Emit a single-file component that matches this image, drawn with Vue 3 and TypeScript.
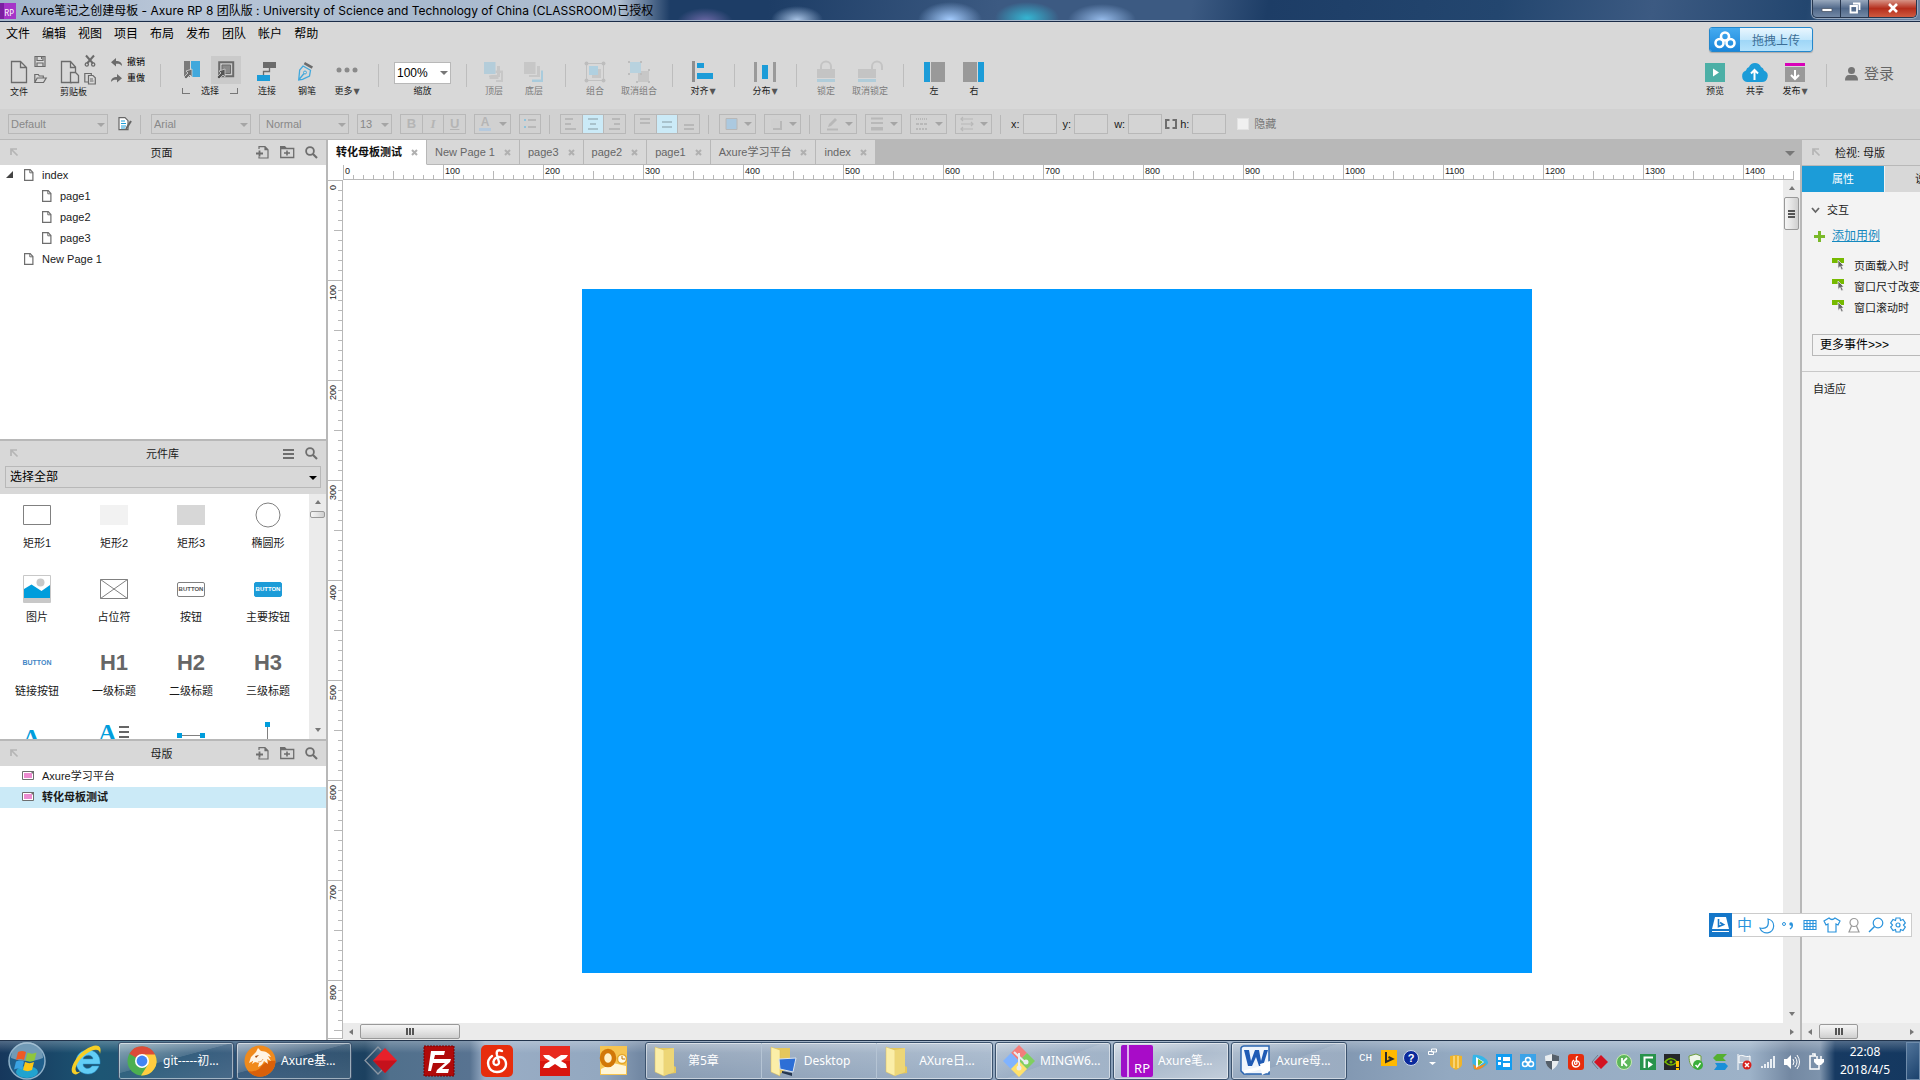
<script setup lang="ts">
import { ref } from 'vue'

interface Tool { id: string; label: string; icon: string; off?: boolean; menu?: boolean; wide?: boolean }
interface Task { label: string; icon: string; active?: boolean }

const menus = ['文件', '编辑', '视图', '项目', '布局', '发布', '团队', '帐户', '帮助']

const icons: Record<string, string> = {
  page: '<path d="M1.5 1.5h9l6 6v15h-15z M10.500 1.500v6h6" fill="none" stroke="#6b6b6b" stroke-width="1.3"/>',
  clip: '<path d="M12 22.500H1.500v-21h9l5 5.500v5 M10.500 1.500v6h5" fill="none" stroke="#6b6b6b" stroke-width="1.300"/><path d="M10.500 12.500h5l3 3v7h-8z" fill="#d8d8d8" stroke="#6b6b6b" stroke-width="1.300"/>',
  save: '<path d="M1 1.500h10v10H1z M3 1.500v4h6v-4 M3 11v-3h6v3" fill="none" stroke="#6b6b6b" stroke-width="1.200"/><path d="M7 2h1v2H7z" fill="#6b6b6b"/>',
  open: '<path d="M.8 10.500v-8h3.500l1 1.500h4v2 M.8 10.500l2.400-4.500h9l-2.700 4.500z" fill="none" stroke="#6b6b6b" stroke-width="1.200"/>',
  cut: '<path d="M2 .5l7 8M10 .5l-7 8" stroke="#6b6b6b" stroke-width="2"/><circle cx="2.800" cy="9.500" r="1.600" fill="none" stroke="#6b6b6b" stroke-width="1.300"/><circle cx="9.200" cy="9.500" r="1.600" fill="none" stroke="#6b6b6b" stroke-width="1.300"/>',
  paste: '<path d="M4 10H.8V1.500h6.500v2" fill="none" stroke="#6b6b6b" stroke-width="1.200"/><path d="M4.500 3.500h4.500l2.300 2.300v6.200H4.500z M6 7h3M6 9h3.500" fill="none" stroke="#6b6b6b" stroke-width="1.200"/>',
  undo: '<path d="M5 0v3c4 0 6 1.500 6 5-1.500-2-3-2.500-6-2.300V8.500L0 4.200z" fill="#6b6b6b"/>',
  redo: '<path d="M6 0v3C2 3 0 4.500 0 8c1.500-2 3-2.500 6-2.300V8.500l5-4.300z" fill="#6b6b6b"/>',
  selA: '<path d="M2 2h6v16H2z" fill="#7b7b7b"/><path d="M9 2h9v16H9z" fill="#41a8dc"/><path d="M10 10v8l-2-2-4 4-2-2 4-4-2-2z" fill="#6b6b6b" stroke="#d8d8d8" stroke-width=".8"/>',
  selB: '<path d="M3.200 3.200h14v14h-14z" fill="none" stroke="#6b6b6b" stroke-width="2"/><path d="M6 6h8.500v8.500H6z" fill="#8a8a8a" stroke="#6b6b6b"/><path d="M9 10v8l-2-2-4 4-2-2 4-4-2-2z" fill="#555" stroke="#ccc" stroke-width=".8"/>',
  connect: '<path d="M7 1h13v6H7z" fill="#6b6b6b"/><path d="M1 14h13v6H1z" fill="#1c9cd8"/><path d="M13.500 7v3.500h-6V14" fill="none" stroke="#6b6b6b" stroke-width="1.300"/>',
  pen: '<path d="M9 1l8 4.500-1.300 2.200-8-4.500z" fill="#6b6b6b"/><path d="M7 5l7.500 4.300-1 5.700-7 3.300L2.700 19l1-10z M3 18.500l5-6" fill="none" stroke="#41a8dc" stroke-width="1.300"/><circle cx="9" cy="11.500" r="1.500" fill="#d8d8d8" stroke="#41a8dc"/>',
  more: '<circle cx="3" cy="9" r="2.500" fill="#8a8a8a"/><circle cx="11" cy="9" r="2.500" fill="#8a8a8a"/><circle cx="19" cy="9" r="2.500" fill="#8a8a8a"/>',
  top: '<path d="M12.500 9.500H20V21h-7v-2h5v-7h-5.500z M8.500 14h7v4h-9v-3z" fill="#c7c7c7"/><path d="M14 5h3v11H6v-1.500h8z" fill="#c7c7c7"/><path d="M1 1h11.500v12H1z" fill="#b4cdda"/>',
  bottom: '<path d="M14 5h3v11H6v-2h8z" fill="#c7c7c7"/><path d="M1 1h11.500v12H1z" fill="#c7c7c7"/><path d="M9 18.500h9V9.500h2V21H9z" fill="#a9cbdc"/>',
  group: '<path d="M2.500 2.500h17v17h-17z" fill="none" stroke="#c0c0c0"/><path d="M8 8h9v9H8z" fill="#c7c7c7"/><path d="M5 5h9v9H5z" fill="#b0d0e0"/><g fill="#bdbdbd"><circle cx="2.500" cy="2.500" r="2"/><circle cx="19.500" cy="2.500" r="2"/><circle cx="2.500" cy="19.500" r="2"/><circle cx="19.500" cy="19.500" r="2"/></g>',
  ungroup: '<path d="M10 10h11v11H10z" fill="#c7c7c7"/><path d="M2 1h11v11H2z" fill="#b8d2df"/><g fill="#bdbdbd"><path d="M0 0h2v2H0zM12 0h2v2h-2zM0 12h2v2H0zM12 12h2v2h-2zM20 8h2v2h-2zM20 20h2v2h-2zM8 20h2v2H8z"/></g>',
  align: '<path d="M0 0h3v21H0z" fill="#8f8f8f"/><path d="M5 2h7v5H5zM5 12h16v6H5z" fill="#1c9cd8"/>',
  distribute: '<path d="M0 1h3v20H0zM19 1h3v20h-3z" fill="#9a9a9a"/><path d="M8 4h6v14H8z" fill="#1c9cd8"/>',
  lock: '<path d="M6 9V5.500a5 5 0 0 1 10 0V9" fill="none" stroke="#c4c4c4" stroke-width="2"/><path d="M2 8h18v9H2z" fill="#c4c4c4"/><path d="M2 18h18v3H2z" fill="#b0ccd9"/>',
  unlock: '<path d="M13 9V5.500a5 5 0 0 1 10 0V9" fill="none" stroke="#c4c4c4" stroke-width="2"/><path d="M-1 8h18v9H-1z" fill="#c4c4c4"/><path d="M-1 18h18v3H-1z" fill="#b0ccd9"/>',
  left: '<path d="M1 1h6v20H1z" fill="#1c9cd8"/><path d="M8 1h14v20H8z" fill="#999"/>',
  right: '<path d="M15 1h6v20h-6z" fill="#1c9cd8"/><path d="M0 1h14v20H0z" fill="#999"/>',
  preview: '<path d="M1 2h20v19H1z" fill="#4cafa6"/><path d="M9 7.500l6 4-6 4z" fill="#fff"/>',
  share: '<path d="M4 21a6 6 0 0 1-1-11.500A5 5 0 0 1 6 6a6.500 6.500 0 0 1 12 0 5 5 0 0 1 3 3.500A6 6 0 0 1 18 21z" fill="#1c9cd8"/><path d="M11.500 19v-9M8 12.500L11.500 9l3.500 3.500" fill="none" stroke="#fff" stroke-width="2"/>',
  publish: '<path d="M1 2h20v3H1z" fill="#d800b8"/><path d="M1 6h20v15H1z" fill="#999"/><path d="M11 9v9M7 14l4 4 4-4" fill="none" stroke="#fff" stroke-width="2"/>',
  search: '<circle cx="5" cy="5" r="3.900" fill="none" stroke="#6e6e6e" stroke-width="1.800"/><path d="M8 8l4 4" stroke="#6e6e6e" stroke-width="2.200"/>',
  addPage: '<path d="M3 3V.7h6l3 3V12H3v-1.500 M9 .7v3h3" fill="none" stroke="#6e6e6e" stroke-width="1.200"/><path d="M0 7.500h7M3.500 4.500v6" stroke="#6e6e6e" stroke-width="1.800"/>',
  addFolder: '<path d="M.7 2.500h13v9H.7z" fill="none" stroke="#6e6e6e" stroke-width="1.300"/><path d="M0 0h5l2 2.500H0z" fill="#6e6e6e"/><path d="M4 7h6M7 4.500v5" stroke="#6e6e6e" stroke-width="1.600"/>',
  list: '<path d="M1 2h11M1 6h11M1 10h11" stroke="#6e6e6e" stroke-width="2"/>',
  collapse: '<path d="M1 7V1h6M1.500 1.500l6 6" fill="none" stroke="#b5b5b5" stroke-width="1.700"/>',
  doc: '<path d="M.6.6h5.600l2.700 3v7.800H.6z" fill="#fff" stroke="#6e6e6e" stroke-width="1.200"/><path d="M5.800.6v3.200h3.200" fill="none" stroke="#6e6e6e"/>',
  master: '<path d="M.5.500h11v8H.5z" fill="#fff" stroke="#6e6e6e"/><path d="M2 2h8v5H2z" fill="#ec8bd0"/><path d="M8 0h4v4z" fill="#6e6e6e"/>',
  event: '<path d="M0 0h12v5H0z" fill="#76b900"/><path d="M6 2v8.500l2-2 1.500 3.500 1.700-.8L9.700 8H12z" fill="#666" stroke="#f3f3f3" stroke-width=".7"/>',
  alignL: '<path d="M1 2h8M1 7h6M1 12h11" stroke="#b8b8b8" stroke-width="2"/>',
  alignC: '<path d="M2 2h10M4 7h6M2 12h10" stroke="#a9c2cc" stroke-width="2"/>',
  alignR: '<path d="M4 2h8M6 7h6M1 12h11" stroke="#b8b8b8" stroke-width="2"/>',
  valT: '<path d="M2 2h10M2 6h10" stroke="#b8b8b8" stroke-width="2"/>',
  valM: '<path d="M2 5h10M2 10h10" stroke="#a9c2cc" stroke-width="2"/>',
  valB: '<path d="M2 8h10M2 12h10" stroke="#b8b8b8" stroke-width="2"/>',
  fill: '<path d="M2 1.500h11v11H2z" fill="#abc9e0" stroke="#b8b8b8"/>',
  shadow: '<path d="M4 4h9v9H4z" fill="#b8b8b8"/><path d="M2 2h9v9H2z" fill="#cfcfcf"/>',
  stroke: '<path d="M2 12.500h11" stroke="#b8b8b8" stroke-width="2"/><path d="M3 10l1-3 6-6 2 2-6 6z" fill="#b8b8b8"/>',
  weight: '<path d="M1 1.500h12M1 6h12M1 11.500h12" stroke="#b8b8b8" stroke-width="2"/><path d="M1 10h12v3.500H1z" fill="#b8b8b8"/>',
  dash: '<path d="M1 2h12" stroke="#b8b8b8" stroke-width="2" stroke-dasharray="1 1"/><path d="M1 7h12" stroke="#b8b8b8" stroke-width="2" stroke-dasharray="3 1"/><path d="M1 12h12" stroke="#b8b8b8" stroke-width="2" stroke-dasharray="2 1"/>',
  arrows: '<path d="M1 2h12M3 0L1 2l2 2M1 7h12M11 5l2 2-2 2M1 12h12M3 10l-2 2 2 2" fill="none" stroke="#b8b8b8" stroke-width="1.200"/>',
  rect1: '<path d="M.5 4.500h27v19H.5z" fill="#fff" stroke="#808080"/>',
  rect2: '<path d="M0 4h28v20H0z" fill="#f2f2f2"/>',
  rect3: '<path d="M0 4h28v20H0z" fill="#d7d7d7"/>',
  oval: '<circle cx="14" cy="14" r="12" fill="#fff" stroke="#808080"/>',
  image: '<path d="M.5.500h27v27H.5z" fill="#fff" stroke="#c8c8c8"/><path d="M1 23h26v4H1z" fill="#c8c8c8"/><circle cx="17.500" cy="7.500" r="4" fill="#c8c8c8"/><path d="M1 14l7.500-4.500 10 6.500 8.500-6v13H1z" fill="#009ddc"/>',
  placeholder: '<path d="M.5 4.500h27v19H.5zM.5 4.500l27 19M27.500 4.500l-27 19" fill="none" stroke="#808080"/>',
  hline: '<path d="M2 12.500h24" stroke="#808080"/><path d="M0 10h5v5H0zM23 10h5v5h-5z" fill="#009ddc"/>',
  vline: '<path d="M13.500 2v26" stroke="#808080"/><path d="M11 -1h5v5h-5z" fill="#009ddc"/>',
  // taskbar programs, 32 x 32
  chrome: '<circle cx="16" cy="16" r="14.500" fill="#4caf50"/><path d="M16 16L3.400 8.700A14.500 14.500 0 0 1 29.300 10H16z" fill="#dd4b39"/><path d="M16 9.500h13A14.500 14.500 0 0 1 15 30.500l7-11z" fill="#ffcd40"/><circle cx="16" cy="16" r="7" fill="#fff"/><circle cx="16" cy="16" r="5.400" fill="#4285f4"/>',
  cheetah: '<circle cx="16" cy="16" r="15.500" fill="#f08a1c"/><path d="M31.500 16A15.500 15.500 0 0 1 4 26c5 1 9 0 12-3s6-8 15.500-7z" fill="#d9600a"/><path d="M5 18l2-6 5-5 2-4 3 3c5 0 9 3 10 6l-3-1 3 5-4-2 1 5-4-3c-1 3-3 5-6 6l1-4-4-1-3 2 1-3-2 1z" fill="#fff4e4"/><path d="M11 11l4-1-3 3z" fill="#a54a08"/><path d="M14 17c3 0 4-1 5-3" fill="none" stroke="#e5a060"/>',
  diamond: '<path d="M16 5l-3-3L0 15.500 13 29l4-4" fill="none" stroke="#8b96a2" stroke-width="1.300"/><path d="M20 3l12 12.500L20 28 8 15.500z" fill="#e8202a"/><path d="M32 15.500L20 28 8 15.500z" fill="#c5111c"/>',
  filezilla: '<path d="M1 1h30v30H1z" fill="#b00a0a" stroke="#7b0000" stroke-dasharray="2 1"/><path d="M8 6h14l-1 4h-9l-1 4h7l-1 4h-7l-2 8H5z M16 14h12l-1 3-8 7h7l-1 4H13l1-3 8-7h-6z" fill="#fff"/>',
  netease: '<rect width="32" height="32" rx="5" fill="#e72d0c"/><path d="M21 6c-4-2-6 0-5 4l2 7c.5 4-6 4-5.500 0 .5-5 8-7 11.500-2 3 6-1 12-8 12-9 0-12-11-5-16" fill="none" stroke="#fff" stroke-width="2.400" stroke-linecap="round"/>',
  xred: '<path d="M1 1h30v30H1z" fill="#d8150e"/><path d="M1 1h30v15H1z" fill="#e82a1e"/><path d="M4 10h6l6 4 6-4h7l-2 3-5 3 5 3 1 4h-6l-6-4-6 4H4l2-4 5-3-5-3z" fill="#fff"/>',
  outlook: '<path d="M3 1h27v29H3z" fill="#f6c451"/><path d="M4 24l12-6 13 3v8H4z" fill="#fff6d8"/><ellipse cx="11" cy="13" rx="6" ry="7" fill="#fff0c8" stroke="#d27808" stroke-width="4.500"/><circle cx="25" cy="14" r="4.500" fill="#fffbe8" stroke="#e5a82c" stroke-width="1.500"/><path d="M25 11v3h3" fill="none" stroke="#c07000"/>',
  folder: '<path d="M9 3h15v18l2 1v6l-15 2z" fill="#e5c75c"/><path d="M5 2l9 3v26l-9-4z" fill="#fbeea8" stroke="#d9bb55" stroke-width=".5"/><path d="M14 5l10-2v24l-10 4z" fill="#edd677"/>',
  deskfolder: '<path d="M9 3h15v18l-10 8z" fill="#e5c75c"/><path d="M5 2l9 3v26l-9-4z" fill="#fbeea8" stroke="#d9bb55" stroke-width=".5"/><path d="M13 14l17-1-3 14-13-3z" fill="#2d6fd6" stroke="#dce5ef"/><path d="M16 26l10 2v3l-10-3z" fill="#24364f"/>',
  git: '<path d="M16 0l8 8-8 8-8-8z" fill="#f37e7c"/><path d="M8 8l8 8-8 8-8-8z" fill="#80b3ff"/><path d="M24 8l8 8-8 8-8-8z" fill="#80cf60"/><path d="M16 16l8 8-8 8-8-8z" fill="#ffe16b"/><path d="M16 8v14M11 7l12 11" stroke="#e8edf2" stroke-width="2"/><circle cx="16" cy="23" r="2.500" fill="#e8edf2"/><circle cx="23" cy="17" r="2.500" fill="#e8edf2"/>',
  word: '<path d="M2 3a3 3 0 0 1 3-2h25v28H5l-3-3z" fill="#eef4fc" stroke="#2a64b0" stroke-width="1.500"/><path d="M5 5h5l2 11 4-11h4l2 11 3-11h4l-5 16h-4l-3-9-4 9H9z" fill="#1f5bb5"/><path d="M21 19l10-3v10l-8 4z" fill="#fff"/><path d="M5 27l20-5" stroke="#fff" stroke-width="3"/>',
  start: '<circle cx="19" cy="19" r="18" fill="#1f5f8c" stroke="#8fb1c9" stroke-width="1.500"/><ellipse cx="19" cy="30" rx="11" ry="6" fill="#23b9e6" opacity=".75"/><path d="M3 16a16 16 0 0 1 32 0c-9 4-22 4-32 0z" fill="#b5cad9" opacity=".55"/><path d="M10 10c3-1.500 5-1.500 8 0l-2 8c-3-1.500-5-1.500-8 0z" fill="#ef5a24"/><path d="M19.500 10.500c3 1.500 6 1.500 9 0l-2 8c-3 1.500-6 1.500-9 0z" fill="#8fc63d"/><path d="M8 19.500c3-1.500 5-1.500 8 0l-2 8c-3-1.500-5-1.500-8 0z" fill="#3aa3e3"/><path d="M17 20c3 1.500 6 1.500 9 0l-2 8c-3 1.500-6 1.500-9 0z" fill="#fbc616"/>',
  ie: '<path d="M28 21c-2 5-6 8-11 8-7 0-12-5-12-12S10 5 17 5s12 5 12 12v2H12c0 5 7 6 9 2z M12 14h10c0-5-9-5-10 0z" fill="#62cdf6" fill-rule="evenodd" stroke="#2a9ad4" stroke-width=".5"/><path d="M3 29C-3 26 4 12 14 5S32-1 29 9c0-6-7-5-14 0S3 23 5 26c1 2 3 1 5 0-3 3-5 4-7 3z" fill="#f6cf26"/>',
}

const docTools: Tool[] = [
  { id: 'connect', label: '连接', icon: 'connect' },
  { id: 'pen', label: '钢笔', icon: 'pen' },
  { id: 'more', label: '更多', icon: 'more', menu: true },
]
const toolGroups: Tool[][] = [
  [{ id: 'top', label: '顶层', icon: 'top', off: true }, { id: 'bottom', label: '底层', icon: 'bottom', off: true }],
  [{ id: 'group', label: '组合', icon: 'group', off: true, wide: true }, { id: 'ungroup', label: '取消组合', icon: 'ungroup', off: true, wide: true }],
  [{ id: 'align', label: '对齐', icon: 'align', menu: true }],
  [{ id: 'distribute', label: '分布', icon: 'distribute', menu: true }],
  [{ id: 'lock', label: '锁定', icon: 'lock', off: true, wide: true }, { id: 'unlock', label: '取消锁定', icon: 'unlock', off: true, wide: true }],
  [{ id: 'left', label: '左', icon: 'left' }, { id: 'right', label: '右', icon: 'right' }],
]
const shareTools: Tool[] = [
  { id: 'preview', label: '预览', icon: 'preview' },
  { id: 'share', label: '共享', icon: 'share' },
  { id: 'publish', label: '发布', icon: 'publish', menu: true },
]

const tabs = ['转化母板测试', 'New Page 1', 'page3', 'page2', 'page1', 'Axure学习平台', 'index']
const activeTab = ref(0)
const pages = [
  { name: 'index', depth: 0, open: true },
  { name: 'page1', depth: 1 },
  { name: 'page2', depth: 1 },
  { name: 'page3', depth: 1 },
  { name: 'New Page 1', depth: 0 },
]
const masters = ['Axure学习平台', '转化母板测试']
const activeMaster = ref(1)

const widgets = [
  { name: '矩形1', icon: 'rect1' }, { name: '矩形2', icon: 'rect2' }, { name: '矩形3', icon: 'rect3' }, { name: '椭圆形', icon: 'oval' },
  { name: '图片', icon: 'image' }, { name: '占位符', icon: 'placeholder' }, { name: '按钮', text: 'BUTTON', kind: 'btn' }, { name: '主要按钮', text: 'BUTTON', kind: 'btn primary' },
  { name: '链接按钮', text: 'BUTTON', kind: 'link' }, { name: '一级标题', text: 'H1', kind: 'head' }, { name: '二级标题', text: 'H2', kind: 'head' }, { name: '三级标题', text: 'H3', kind: 'head' },
  { name: '', text: 'A', kind: 'letter low' }, { name: '', text: 'A', kind: 'letter para' }, { name: '', icon: 'hline' }, { name: '', icon: 'vline' },
]

const hMarks = Array.from({ length: 15 }, (_, i) => i * 100)
const vMarks = Array.from({ length: 9 }, (_, i) => i * 100)
const events = ['页面载入时', '窗口尺寸改变时', '窗口滚动时']

const folderTasks: Task[] = [
  { label: '第5章', icon: 'folder' },
  { label: 'Desktop', icon: 'deskfolder' },
  { label: 'AXure日...', icon: 'folder' },
]
const pinned = [
  { name: 'diamond', label: 'Diamond' },
  { name: 'filezilla', label: 'FileZilla' },
  { name: 'netease', label: 'Music' },
  { name: 'xred', label: 'X' },
  { name: 'outlook', label: 'Outlook' },
]
const trayIcons = [
  '<path d="M2 2l6-1 6 1v8c0 3-3 4-6 6-3-2-6-3-6-6z" fill="#f0b429"/><path d="M6 2v12M10 2v12" stroke="#fff3c0"/>',
  '<path d="M1 1c8-1 14 4 15 7s-8 8-14 8C0 11 0 5 1 1z" fill="#35b6e8"/><path d="M1 10c4 4 8 2 13-1-2 5-8 8-12 6z" fill="#f58a1f"/><path d="M4 3l8 5-8 6z" fill="#fff"/><path d="M6 5l5 3-5 4z" fill="#74c12b"/>',
  '<path d="M0 0h16v16H0z" fill="#139cf0"/><path d="M2 3h3v3H2zM2 8h3v3H2zM7 3h7v4H7zM7 9h7v4H7z" fill="#fff"/>',
  '<path d="M0 0h16v16H0z" fill="#3ba3e8"/><circle cx="8" cy="6" r="2.500" fill="none" stroke="#fff" stroke-width="1.500"/><circle cx="5" cy="10" r="2.500" fill="none" stroke="#fff" stroke-width="1.500"/><circle cx="11" cy="10" r="2.500" fill="none" stroke="#fff" stroke-width="1.500"/>',
  '<path d="M1 2l7-2 7 2c0 7-2 11-7 14C3 13 1 9 1 2z" fill="#e9edf0"/><path d="M8 0l7 2v5H8zM1.500 7H8v9C4 14 2 11 1.500 7z" fill="#55606b"/>',
  '<rect width="16" height="16" rx="3" fill="#e72d0c"/><path d="M10 3c-2-1-2 1-1.500 3l.5 3c0 2-3 2-2.500-.5.5-2 3-2 4.500-.5 2 3-1 5-3 5-4 0-5-5-2-7" fill="none" stroke="#fff" stroke-width="1.300"/>',
  '<path d="M9 1l7 7-7 7-7-7z" fill="#d31322"/><path d="M6 1L0 8l6 7" fill="none" stroke="#707b8a"/>',
  '<circle cx="8" cy="8" r="7.500" fill="#5db75b" stroke="#c6e9b4"/><path d="M6 4v8M11 4L7 8l4 4" fill="none" stroke="#fff" stroke-width="1.800"/>',
  '<path d="M0 0h16v16H0z" fill="#28934c"/><path d="M4.500 14V3.500H13" fill="none" stroke="#fff" stroke-width="2"/><path d="M8 7l5 3.500L8 14z" fill="#fff"/>',
  '<path d="M0 0h16v16H0z" fill="#25272a"/><path d="M1 8c4-5 9-4 12 0-4 4-8 4-12 0z" fill="none" stroke="#76b900" stroke-width="1.500"/><circle cx="7" cy="8" r="1.500" fill="#76b900"/><path d="M12 7h3v6h-3zM12 14h3v2h-3z" fill="#ffc400"/>',
  '<path d="M1 2l7-2 5 2v6L6 14C3 12 1 9 1 2z" fill="#eef5e9" stroke="#6d9f3e"/><circle cx="10" cy="11" r="5" fill="#3bae3b"/><path d="M7.500 11l2 2 3-4" fill="none" stroke="#fff" stroke-width="1.500"/>',
  '<path d="M1 4l4-4h10l-4 4 3 3H4z" fill="#55b030"/><path d="M3 9h10l3 3-3 4H2l3-4z" fill="#1a8fd8"/>',
  '<path d="M2 0v16M3 2c4-2 6 2 11 0v7c-5 2-7-2-11 0z" fill="#b9c6d4" stroke="#fff"/><circle cx="11" cy="11" r="4.500" fill="#d8201c"/><path d="M9 9l4 4M13 9l-4 4" stroke="#fff" stroke-width="1.500"/>',
  '<g fill="#e9eef3"><path d="M1 12h2v2H1zM4 10h2v4H4zM7 8h2v6H7zM10 5h2v9h-2zM13 2h2v12h-2z"/></g>',
  '<path d="M0 5h3l4-4v14l-4-4H0z" fill="#fff"/><path d="M9 5q2 3 0 6M11 3q4 5 0 10M13 1q5 7 0 14" fill="none" stroke="#fff"/>',
  '<path d="M8 2H2v13h6M4 0h3v2" fill="none" stroke="#fff" stroke-width="1.500"/><path d="M9 2v4M13 2v4M11 11v4H8" fill="none" stroke="#fff" stroke-width="1.500"/><path d="M6 5h10v3l-3 3H9L6 8z" fill="#fff"/>',
]
const imeIcons = [
  '<path d="M10 2a7 7 0 1 1-8 9q10 2 8-9z" fill="none" stroke="#2a93dc" stroke-width="1.200"/>',
  '<circle cx="4" cy="7" r="1.500" fill="none" stroke="#2a93dc"/><circle cx="11" cy="7" r="1.700" fill="#2a93dc"/><path d="M12 7q1 3-2 5" fill="none" stroke="#2a93dc" stroke-width="1.500"/>',
  '<path d="M2 3.500h12v9H2zM2 6.500h12M2 9.500h12M5 3.500v9M8 3.500v9M11 3.500v9" fill="none" stroke="#2a93dc" stroke-width="1.100"/>',
  '<path d="M5 1q3 3 6 0l5 3-2 4-2-1v8H4V7L2 8 0 4z" fill="none" stroke="#2a93dc" stroke-width="1.200"/>',
  '<circle cx="8" cy="5.500" r="4" fill="none" stroke="#999" stroke-width="1.200"/><path d="M5.500 9L3 15h10l-2.500-6" fill="none" stroke="#999" stroke-width="1.200"/>',
  '<circle cx="10" cy="6" r="4.800" fill="none" stroke="#2a93dc" stroke-width="1.200"/><path d="M6.500 9.500L1 15" stroke="#2a93dc" stroke-width="1.500"/>',
  '<circle cx="8" cy="8" r="2" fill="none" stroke="#2a93dc" stroke-width="1.200"/><path d="M6 1h4l.5 2.500 2.500-1 2.300 3.500L13.500 8l1.800 2-2.300 3.500-2.500-1L10 15H6l-.5-2.500-2.500 1L.7 10l1.800-2L.7 6 3 2.500l2.500 1z" fill="none" stroke="#2a93dc" stroke-width="1.200"/>',
]
</script>

<template>
  <div class="desktop">
    <header class="titlebar">
      <span class="app-logo">RP</span>
      <h1>Axure笔记之创建母板 - Axure RP 8 团队版 : University of Science and Technology of China (CLASSROOM)已授权</h1>
      <div class="win-controls">
        <button aria-label="最小化"><svg width="12" height="12"><path d="M1 6.500h10v3H1z" fill="#fff" stroke="#4b5768" stroke-width=".8" /></svg></button>
        <button aria-label="还原"><svg width="12" height="12"><path d="M4 1.500h6.500V8M1.500 4h6.500v6.500H1.500z" fill="none" stroke="#fff" stroke-width="1.800" /></svg></button>
        <button class="close" aria-label="关闭"><svg width="12" height="10"><path d="M2 1l8 8M10 1L2 9" stroke="#fff" stroke-width="2.600" /></svg></button>
      </div>
    </header>

    <nav class="menubar">
      <button v-for="m in menus" :key="m">{{ m }}</button>
    </nav>
    <button class="upload">
      <span class="upload-logo"><svg width="22" height="18" viewBox="0 0 22 18" fill="none" stroke="#fff" stroke-width="2.600"><circle cx="11" cy="5.500" r="4" /><circle cx="5.500" cy="12" r="4" /><circle cx="16.500" cy="12" r="4" /></svg></span>
      <span class="upload-text">拖拽上传</span>
    </button>

    <div class="toolbar">
      <div class="file-tool">
        <button aria-label="新建"><svg width="18" height="24" v-html="icons.page" /></button>
        <div class="mini">
          <button aria-label="保存"><svg width="13" height="13" v-html="icons.save" /></button>
          <button aria-label="打开"><svg width="13" height="13" v-html="icons.open" /></button>
        </div>
        <span class="cap">文件</span>
      </div>
      <div class="file-tool clip">
        <button aria-label="复制"><svg width="20" height="24" v-html="icons.clip" /></button>
        <div class="mini">
          <button aria-label="剪切"><svg width="13" height="13" v-html="icons.cut" /></button>
          <button aria-label="粘贴"><svg width="13" height="13" v-html="icons.paste" /></button>
        </div>
        <span class="cap">剪贴板</span>
      </div>
      <div class="history">
        <button><svg width="11" height="9" v-html="icons.undo" />撤销</button>
        <button><svg width="11" height="9" v-html="icons.redo" />重做</button>
      </div>
      <i class="sep first" />
      <div class="select-tool">
        <div class="select-modes">
          <button aria-label="相交选中"><svg width="20" height="22" v-html="icons.selA" /></button>
          <button class="on" aria-label="包含选中"><svg width="20" height="22" v-html="icons.selB" /></button>
        </div>
        <div class="bracket"><i /><span>选择</span><i class="r" /></div>
      </div>
      <button v-for="t in docTools" :key="t.id" class="tool">
        <svg width="22" height="22" v-html="icons[t.icon]" /><span>{{ t.label }}<b v-if="t.menu">▼</b></span>
      </button>
      <i class="sep zoom-sep" />
      <div class="zoom">
        <span class="drop white"><select id="zoom"><option>100%</option></select></span>
        <label for="zoom">缩放</label>
      </div>
      <template v-for="(g, gi) in toolGroups" :key="gi">
        <i class="sep" :class="{ tight: g[0].off }" />
        <button v-for="t in g" :key="t.id" class="tool" :class="{ off: t.off, wide: t.wide }">
          <svg width="22" height="22" v-html="icons[t.icon]" /><span>{{ t.label }}<b v-if="t.menu">▼</b></span>
        </button>
      </template>
      <div class="push">
        <button v-for="t in shareTools" :key="t.id" class="tool">
          <svg :width="t.id === 'share' ? 24 : 22" height="22" v-html="icons[t.icon]" /><span>{{ t.label }}<b v-if="t.menu">▼</b></span>
        </button>
        <i class="sep" />
        <button class="login"><svg width="13" height="14"><circle cx="6.500" cy="3.500" r="3.500" fill="#757575" /><path d="M0 13.500q0-5.500 4-5.500h5q4 0 4 5.500z" fill="#757575" /></svg>登录</button>
      </div>
    </div>

    <div class="stylebar">
      <span class="drop w100"><select aria-label="样式"><option>Default</option></select></span>
      <button class="bare" aria-label="样式管理"><svg width="14" height="14"><path d="M1 .7h6l3 3v9H1z" fill="#fff" stroke="#666" stroke-width="1.200" /><path d="M3 4h4M3 6.500h5M3 9h5M3 11h4" stroke="#1c9cd8" /><path d="M8 12l5-8" stroke="#666" stroke-width="2" /></svg></button>
      <i class="vs" />
      <span class="drop w100"><select aria-label="字体"><option>Arial</option></select></span>
      <span class="drop w90"><select aria-label="字形"><option>Normal</option></select></span>
      <span class="drop w35"><select aria-label="字号"><option>13</option></select></span>
      <div class="seg"><button class="bold">B</button><button class="ital">I</button><button class="under">U</button></div>
      <button class="dd"><span class="color-a">A</span></button>
      <button class="box" aria-label="项目符号"><svg width="14" height="14"><path d="M1 2h2v2H1zM1 9h2v2H1z" fill="#8ec3dc" /><path d="M5 3h8M5 10h8" stroke="#b8b8b8" stroke-width="2" /></svg></button>
      <i class="vs" />
      <div class="seg"><button v-for="a in ['alignL', 'alignC', 'alignR']" :key="a" :class="{ on: a === 'alignC' }" :aria-label="a"><svg width="14" height="14" v-html="icons[a]" /></button></div>
      <div class="seg"><button v-for="a in ['valT', 'valM', 'valB']" :key="a" :class="{ on: a === 'valM' }" :aria-label="a"><svg width="14" height="14" v-html="icons[a]" /></button></div>
      <i class="vs" />
      <button v-for="a in ['fill', 'shadow']" :key="a" class="dd" :aria-label="a"><svg width="14" height="14" v-html="icons[a]" /></button>
      <i class="vs" />
      <button v-for="a in ['stroke', 'weight', 'dash', 'arrows']" :key="a" class="dd" :aria-label="a"><svg width="14" height="14" v-html="icons[a]" /></button>
      <i class="vs" />
      <div class="coords">
        <label>x:<input type="text" /></label>
        <label>y:<input type="text" /></label>
        <label>w:<input type="text" /></label>
        <label class="h"><svg width="12" height="10"><path d="M4.500 1H1v8h3.500M7.500 1H11v8H7.500" fill="none" stroke="#6e6e6e" stroke-width="2" /></svg>h:<input type="text" /></label>
        <label class="hide"><input type="checkbox" />隐藏</label>
      </div>
    </div>

    <main class="work">
      <aside class="left">
        <section class="panel pages">
          <header><svg class="corner" width="9" height="9" v-html="icons.collapse" /><h2>页面</h2>
            <button aria-label="添加页面"><svg width="14" height="13" v-html="icons.addPage" /></button>
            <button aria-label="添加文件夹"><svg width="15" height="13" v-html="icons.addFolder" /></button>
            <button aria-label="搜索"><svg width="13" height="13" v-html="icons.search" /></button>
          </header>
          <ul class="tree">
            <li v-for="p in pages" :key="p.name" :class="{ child: p.depth }"><i class="tw" :class="{ open: p.open }" /><svg width="10" height="12" v-html="icons.doc" />{{ p.name }}</li>
          </ul>
        </section>
        <section class="panel library">
          <header><svg class="corner" width="9" height="9" v-html="icons.collapse" /><h2>元件库</h2>
            <button aria-label="选项"><svg width="13" height="12" v-html="icons.list" /></button>
            <button aria-label="搜索"><svg width="13" height="13" v-html="icons.search" /></button>
          </header>
          <div class="lib-pick"><span class="drop dark"><select aria-label="元件库"><option>选择全部</option></select></span></div>
          <div class="lib-body">
            <div class="grid">
              <div v-for="(w, i) in widgets" :key="i" class="widget">
                <span class="art">
                  <svg v-if="w.icon" width="28" height="28" v-html="icons[w.icon]" />
                  <span v-else :class="w.kind">{{ w.text }}</span>
                </span>
                <span class="name">{{ w.name }}</span>
              </div>
            </div>
            <div class="vbar"><i class="up" /><span class="thumb small" /><i class="down" /></div>
          </div>
        </section>
        <section class="panel masters">
          <header><svg class="corner" width="9" height="9" v-html="icons.collapse" /><h2>母版</h2>
            <button aria-label="添加母版"><svg width="14" height="13" v-html="icons.addPage" /></button>
            <button aria-label="添加文件夹"><svg width="15" height="13" v-html="icons.addFolder" /></button>
            <button aria-label="搜索"><svg width="13" height="13" v-html="icons.search" /></button>
          </header>
          <ul class="tree">
            <li v-for="(m, i) in masters" :key="m" :class="{ picked: i === activeMaster }" @click="activeMaster = i"><i class="tw" /><svg class="m" width="12" height="9" v-html="icons.master" />{{ m }}</li>
          </ul>
        </section>
      </aside>

      <section class="center">
        <div class="tabs">
          <button v-for="(t, i) in tabs" :key="t" :class="{ active: i === activeTab }" @click="activeTab = i">{{ t }}
            <svg width="7" height="7"><path d="M1 1l5 5M6 1L1 6" stroke="#b0b0b0" stroke-width="2" /></svg>
          </button>
          <i class="tab-more" />
        </div>
        <div class="hruler"><span v-for="n in hMarks" :key="n">{{ n }}</span></div>
        <div class="stage">
          <div class="vruler"><span v-for="n in vMarks" :key="n"><b>{{ n }}</b></span></div>
          <div class="view">
            <div class="canvas-row">
              <div class="canvas"><div class="shape" /></div>
              <div class="vbar"><i class="up" /><span class="thumb" /><i class="down" /></div>
            </div>
            <div class="hbar"><i class="lt" /><span class="thumb" /><i class="rt" /></div>
          </div>
        </div>
      </section>

      <aside class="inspector">
        <header><svg class="corner" width="9" height="9" v-html="icons.collapse" /><h2>检视: 母版</h2></header>
        <div class="itabs"><button class="on">属性</button><button>说明</button></div>
        <div class="ibody">
          <h3><svg width="9" height="7"><path d="M1 1l3.500 4L8 1" fill="none" stroke="#666" stroke-width="1.800" /></svg>交互</h3>
          <p class="add"><svg width="11" height="11"><path d="M0 5.500h11M5.500 0v11" stroke="#7ab929" stroke-width="3" /></svg><a href="#">添加用例</a></p>
          <ul><li v-for="e in events" :key="e"><svg width="13" height="13" v-html="icons.event" />{{ e }}</li></ul>
          <button class="more-events">更多事件&gt;&gt;&gt;</button>
          <p class="adapt">自适应</p>
        </div>
        <div class="hbar"><i class="lt" /><span class="thumb" /><i class="rt" /></div>
      </aside>
    </main>

    <div class="ime">
      <span class="ime-logo"><svg width="17" height="18"><path d="M3 1h11l3 12H0z" fill="#fff" /><path d="M0 15.500h17" stroke="#fff" /><path d="M6.500 3v7.500l5-2-3.500-2" fill="none" stroke="#1577c9" stroke-width="1.600" /></svg></span>
      <span class="zh">中</span>
      <svg v-for="(g, i) in imeIcons" :key="i" width="16" height="16" v-html="g" />
    </div>

    <footer class="taskbar">
      <button class="orb" aria-label="开始"><svg width="38" height="38" v-html="icons.start" /></button>
      <button class="ie" aria-label="Internet Explorer"><svg width="32" height="32" v-html="icons.ie" /></button>
      <button class="task dark"><svg width="32" height="32" v-html="icons.chrome" />git-----初...</button>
      <button class="task dark"><svg width="32" height="32" v-html="icons.cheetah" />Axure基...</button>
      <div class="pins"><button v-for="p in pinned" :key="p.name" :aria-label="p.label"><svg width="32" height="32" v-html="icons[p.name]" /></button></div>
      <div class="stack"><button v-for="(f, i) in folderTasks" :key="i"><svg width="32" height="32" v-html="icons[f.icon]" />{{ f.label }}</button></div>
      <button class="task"><svg width="32" height="32" v-html="icons.git" />MINGW6...</button>
      <button class="task active"><span class="rp">RP</span>Axure笔...</button>
      <button class="task"><svg width="32" height="32" v-html="icons.word" />Axure母...</button>
      <div class="tray">
        <span class="lang">CH</span>
        <svg width="16" height="16"><path d="M0 0h16v16H0z" fill="#ffb900" /><path d="M5 2v10l6.500-3-4-2" fill="none" stroke="#2b2b2b" stroke-width="2" /></svg>
        <span class="help">?</span>
        <svg class="restore" width="9" height="18"><path d="M3.500 1h5v3h-5zM.5 3.500h5v3h-5z" fill="none" stroke="#fff" /><path d="M1 14h7l-3.500 3z" fill="#fff" /></svg>
        <div class="icons"><svg v-for="(g, i) in trayIcons" :key="i" width="16" height="16" v-html="g" /></div>
        <div class="clock"><time>22:08</time><time>2018/4/5</time></div>
        <button class="peek" aria-label="显示桌面" />
      </div>
    </footer>
  </div>
</template>

<style>
body { margin: 0; }
</style>

<style scoped>
* { box-sizing: border-box; }
.desktop { position: relative; display: flex; flex-direction: column; min-height: 100vh; overflow: hidden; background: #d8d8d8; color: #1a1a1a; font: 11px/16px "Liberation Sans", "Noto Sans CJK SC", sans-serif; }
button { font: inherit; color: inherit; background: none; border: 0; padding: 0; margin: 0; }
svg { display: block; flex: none; overflow: visible; }
h1, h2, h3, p, ul { margin: 0; padding: 0; list-style: none; font-weight: normal; }
i { font-style: normal; }

.titlebar { height: 22px; display: flex; align-items: center; border-bottom: 1px solid #1b2c48; box-shadow: inset 0 -1px #a8b8cc; overflow: hidden;
  background:
    radial-gradient(ellipse 28px 14px at 705px 22px, #6f6aa8, transparent),
    radial-gradient(ellipse 26px 14px at 797px 20px, #a9c4e6, transparent),
    radial-gradient(ellipse 32px 18px at 950px 20px, #a5cdff, transparent),
    radial-gradient(ellipse 32px 16px at 1027px 18px, #35b5d2, transparent),
    radial-gradient(ellipse 34px 16px at 1102px 20px, #96bbea, transparent),
    linear-gradient(90deg, #9fb2ca 0, #bac7d8 180px, #a9bace 420px, #aebdd0 620px, transparent 670px),
    linear-gradient(100deg, #1d3d66 0 40%, #3c5a82 52%, #3c5a82 62%, #1d3d66 66%, #23466f 78%, #3c5a82 86%, #23466f 94%, #6b84a3); }
.app-logo { width: 16px; height: 16px; background: linear-gradient(90deg, #7b1fa2 0 4px, #a535c8 4px); color: #fff; font: 8px/20px "Noto Sans", sans-serif; text-align: right; padding-right: 2px; }
h1 { font: 12px/18px Inter, "Noto Sans CJK SC", sans-serif; color: #000; padding-left: 5px; white-space: nowrap; }
.win-controls { margin: 0 3px 4px auto; height: 18px; display: flex; border: 1px solid #26364e; border-top: 0; border-radius: 0 0 5px 5px; overflow: hidden; box-shadow: 0 0 1px 1px #9fb0c5; }
.win-controls button { width: 28px; display: grid; place-items: center; background: linear-gradient(#98a8bd, #51698a 50%, #7288a5); border-right: 1px solid #26364e; }
.win-controls .close { width: 47px; border: 0; background: linear-gradient(#d79386, #b52e1c 50%, #cf5a40); }

.menubar { height: 26px; display: flex; align-items: center; gap: 12px; padding: 0 6px 2px; font-size: 12px; color: #000; }
.upload { position: absolute; top: 27px; right: 107px; width: 104px; height: 25px; display: flex; border: 1px solid #2387cc; border-radius: 3px; overflow: hidden; background: linear-gradient(#e9f6fe, #c4e7fb 50%, #9ed6f7 52%, #b5e2fb); box-shadow: 0 1px 1px #aaa; }
.upload-logo { width: 30px; height: 23px; display: grid; place-items: center; background: linear-gradient(#45abf0, #1b86da); }
.upload-text { flex: 1; font-size: 12px; line-height: 26px; color: #3c6e96; }

.toolbar { height: 61px; display: flex; align-items: flex-start; padding-top: 8px; font-size: 9px; line-height: 12px; white-space: nowrap; }
.toolbar > * { flex: none; }
.file-tool { margin-left: 10px; width: 40px; display: grid; grid-template-columns: 24px 16px; grid-template-rows: 30px 12px; align-items: center; }
.file-tool.clip { width: 50px; }
.file-tool > button { padding-top: 2px; }
.mini { display: flex; flex-direction: column; gap: 4px; padding-bottom: 3px; }
.cap { grid-column: 1 / 3; }
.history { margin-left: 1px; display: flex; flex-direction: column; gap: 4px; }
.history button { display: flex; align-items: center; gap: 5px; font-size: 9px; color: #000; }
.sep { width: 1px; height: 23px; margin: 8px 10px 0 11px; background: #bdbdbd; }
.sep.tight { margin-right: 7px; }
.sep.first { margin: 8px 21px 0 15px; }
.sep.zoom-sep { margin-right: 15px; }
.select-tool { width: 65px; }
.select-modes { display: flex; gap: 9px; }
.select-modes button { width: 20px; height: 28px; display: grid; place-items: center; }
.select-modes .on { width: 30px; background: #cacaca; }
.bracket { display: flex; align-items: center; justify-content: space-between; width: 56px; height: 14px; }
.bracket i { width: 8px; height: 6px; border: solid #777; border-width: 0 0 1px 1px; }
.bracket i.r { border-width: 0 1px 1px 0; }
.tool { width: 40px; display: flex; flex-direction: column; align-items: center; gap: 2px; padding-top: 5px; }
.tool svg { height: 22px; }
.tool b { font: 8px/10px "DejaVu Sans", sans-serif; color: #555; margin-left: 1px; }
.tool.wide { width: 44px; }
.tool.off { color: #7c7c7c; }
.zoom { display: flex; flex-direction: column; align-items: center; gap: 1px; padding-top: 6px; width: 57px; margin-right: 4px; }
.push { margin-left: auto; display: flex; padding-right: 26px; }
.push .sep { margin-right: 18px; }
.login { display: flex; align-items: center; gap: 6px; height: 36px; font-size: 15px; color: #666; }

.drop { position: relative; display: block; height: 20px; }
.drop select { appearance: none; width: 100%; height: 100%; margin: 0; padding: 0 2px; border: 1px solid #b8b8b8; border-radius: 0; background: none; font: inherit; color: #888; }
.drop::after { content: ""; position: absolute; right: 3px; top: 9px; border: 4px solid transparent; border-top-color: #a5a5a5; border-bottom: 0; pointer-events: none; }
.drop.white { width: 57px; height: 22px; font-size: 12px; }
.drop.white select { background: #fff; color: #000; }
.drop.white::after { border-top-color: #777; }
.drop.dark { width: 100%; height: 22px; font-size: 12px; }
.drop.dark select { color: #000; padding-left: 4px; }
.drop.dark::after { border-top-color: #000; right: 4px; top: 10px; }
.w100 { width: 100px; } .w90 { width: 90px; } .w35 { width: 35px; }
.w90 select { padding-left: 6px; }

.stylebar { height: 31px; display: flex; align-items: center; gap: 8px; padding: 0 8px; background: #d1d1d1; border-bottom: 1px solid #b8b8b8; white-space: nowrap; }
.stylebar > * { flex: none; }
.bare { width: 16px; padding-left: 2px; }
.vs { width: 3px; height: 19px; border-left: 1px solid #b8b8b8; }
.seg { display: flex; border: 1px solid #b8b8b8; height: 20px; width: 66px; color: #b5b5b5; font-weight: bold; }
.seg button { flex: 1; display: grid; place-items: center; }
.seg button + button { border-left: 1px solid #b8b8b8; }
.seg .on { background: #cbeaf7; }
.bold, .ital, .under { font-size: 13px; }
.ital { font-style: italic; font-family: "Liberation Serif", serif; }
.under { text-decoration: underline; }
.box { width: 22px; height: 20px; border: 1px solid #b8b8b8; display: grid; place-items: center; }
.dd { width: 37px; height: 20px; border: 1px solid #b8b8b8; display: flex; align-items: center; justify-content: space-between; padding: 0 3px 0 4px; }
.dd::after { content: ""; border: 4px solid transparent; border-top-color: #a5a5a5; border-bottom: 0; }
.color-a { width: 12px; height: 14px; line-height: 11px; font-size: 12px; font-weight: bold; color: #b5b5b5; border-bottom: 3px solid #b5c9dd; }
.coords { display: flex; align-items: center; gap: 6px; }
.coords label { display: flex; align-items: center; gap: 3px; }
.coords input[type=text] { width: 34px; height: 20px; border: 1px solid #b8b8b8; background: #d4d4d4; padding: 0; margin: 0; }
.coords .h { margin-left: -3px; }
.coords .hide { margin-left: 5px; gap: 5px; color: #777; }
.coords input[type=checkbox] { appearance: none; width: 12px; height: 12px; margin: 0; background: #f0f0f0; border: 1px solid #e2e2e2; }

.work { flex: 1; display: flex; background: #b8b8b8; gap: 2px; }
.left { flex: 0 0 326px; display: flex; flex-direction: column; gap: 2px; }
.panel header, .inspector header { height: 25px; display: flex; align-items: center; background: #d8d8d8; position: relative; padding: 0 8px 0 10px; gap: 10px; }
.panel header button { display: block; }
h2 { font-size: 11px; }
.panel h2 { flex: 1; text-align: center; }
.pages h2, .masters h2 { padding-left: 48px; }
.library h2 { padding-left: 24px; }
.pages { background: #fff; height: 299px; }
.tree li { height: 21px; display: flex; align-items: center; padding-bottom: 2px; }
.tree li svg { margin-right: 8px; }
.tree li svg.m { margin: 0 8px 0 -2px; }
.tree .child { padding-left: 18px; }
.tw { width: 24px; height: 7px; padding-left: 6px; }
.tw.open::before { content: ""; display: block; width: 0; border-left: 7px solid transparent; border-bottom: 7px solid #444; }
.picked { background: #cbeaf7; font-weight: bold; }
.library { height: 298px; background: #d8d8d8; }
.lib-pick { padding: 0 5px 6px; }
.lib-body { height: 245px; display: flex; background: #fff; overflow: hidden; }
.grid { flex: 1; display: grid; grid-template-columns: repeat(4, 77px); grid-auto-rows: 74px; padding-top: 7px; }
.widget { display: flex; flex-direction: column; align-items: center; gap: 6px; padding-right: 3px; }
.art { height: 28px; display: grid; place-items: center; }
.name { height: 16px; }
.btn { width: 28px; height: 15px; border: 1px solid #808080; border-radius: 2px; font: bold 6px/13px "Liberation Sans", sans-serif; text-align: center; color: #555; }
.btn.primary { background: #1c9cd8; border-color: #1c9cd8; color: #fff; }
.link { font: bold 7px/14px "Liberation Sans", sans-serif; color: #3f86c5; }
.head { font: bold 22px/28px "Liberation Sans", sans-serif; color: #666; }
.letter { font: bold 24px/28px "Liberation Serif", serif; color: #009ddc; }
.letter.low { padding-right: 11px; }
.letter.para { display: flex; align-items: center; gap: 3px; height: 18px; line-height: 18px; align-self: start; }
.letter.para::after { content: ""; width: 10px; height: 12px; background: linear-gradient(#666 2px, transparent 2px 5px, #666 5px 7px, transparent 7px 10px, #666 10px); }
.masters { flex: 1; background: #fff; }

.center { flex: 1; min-width: 0; display: flex; flex-direction: column; background: #fff; }
.tabs { height: 25px; display: flex; background: #b8b8b8; }
.tabs button { display: flex; align-items: center; gap: 9px; padding: 0 8px; color: #666; background: #d8d8d8; border-right: 1px solid #b8b8b8; white-space: nowrap; border-bottom: 1px solid #b8b8b8; }
.tabs .active { background: #fff; color: #111; font-weight: bold; border-bottom-color: #fff; }
.tab-more { margin: 11px 5px 0 auto; height: 5px; border: 5px solid transparent; border-top-color: #777; border-bottom: 0; }
.hruler { height: 15px; margin: 0 6px 0 15px; display: flex; overflow: hidden; border-bottom: 1px solid #b8b8b8; font-size: 9px; line-height: 12px; }
.hruler span { flex: 0 0 100px; padding-left: 2px;
  background:
    linear-gradient(#b8b8b8, #b8b8b8) 0 0 / 1px 100% no-repeat,
    linear-gradient(#b8b8b8, #b8b8b8) 50px 100% / 1px 8px no-repeat,
    linear-gradient(90deg, #b8b8b8 1px, transparent 1px) 0 100% / 10px 4px repeat-x; }
.stage { flex: 1; display: flex; }
.vruler { flex: 0 0 15px; height: 859px; display: flex; flex-direction: column; overflow: hidden; border-right: 1px solid #b8b8b8; border-bottom: 1px solid #b8b8b8; font-size: 9px; line-height: 11px; }
.vruler span { flex: 0 0 100px; padding-top: 5px;
  background:
    linear-gradient(#b8b8b8, #b8b8b8) 0 0 / 100% 1px no-repeat,
    linear-gradient(#b8b8b8, #b8b8b8) 100% 50px / 8px 1px no-repeat,
    linear-gradient(#b8b8b8 1px, transparent 1px) 100% 0 / 4px 10px repeat-y; }
.vruler b { display: block; width: 11px; font-weight: normal; writing-mode: vertical-rl; transform: rotate(180deg); }
.view { flex: 1; min-width: 0; display: flex; flex-direction: column; }
.canvas-row { flex: 1; display: flex; }
.canvas { flex: 1; position: relative; overflow: hidden; }
.shape { position: absolute; left: 239px; top: 109px; width: 950px; height: 684px; background: #09f; }
.vbar { flex: 0 0 17px; background: #ebebeb; display: flex; flex-direction: column; align-items: center; padding: 6px 0 7px; }
.hbar { flex: 0 0 17px; background: #ebebeb; display: flex; align-items: center; padding: 0 6px; }
.up, .down { border: 3px solid transparent; }
.up { border-bottom: 4px solid #777; border-top: 0; }
.down { margin-top: auto; border-top: 4px solid #777; border-bottom: 0; }
.lt, .rt { border: 3px solid transparent; }
.lt { border-right: 4px solid #777; border-left: 0; }
.rt { margin-left: auto; border-left: 4px solid #777; border-right: 0; }
.thumb { border: 1px solid #999; border-radius: 2px; display: grid; place-items: center; }
.vbar .thumb { width: 15px; height: 33px; margin-top: 7px; background: linear-gradient(90deg, #f5f5f5, #e4e4e4 50%, #cfcfcf); }
.vbar .thumb::after { content: ""; width: 7px; height: 8px; background: repeating-linear-gradient(#555 0 2px, transparent 2px 3px); }
.vbar .thumb.small { height: 7px; }
.vbar .thumb.small::after { display: none; }
.hbar .thumb { height: 15px; width: 100px; margin-left: 7px; background: linear-gradient(#f5f5f5, #e4e4e4 50%, #cfcfcf); }
.hbar .thumb::after { content: ""; width: 8px; height: 7px; background: repeating-linear-gradient(90deg, #555 0 2px, transparent 2px 3px); }

.inspector { flex: 0 0 118px; display: flex; flex-direction: column; background: #f3f3f3; overflow: hidden; white-space: nowrap; }
.inspector header { gap: 14px; }
.itabs { display: flex; gap: 1px; border-top: 1px solid #b8b8b8; }
.itabs button { flex: 0 0 82px; height: 26px; background: #d8d8d8; }
.itabs .on { background: #1c9cd8; color: #fff; }
.ibody { flex: 1; padding-top: 8px; }
h3 { display: flex; align-items: center; gap: 7px; height: 20px; padding-left: 9px; font-size: 11px; }
.add { display: flex; align-items: center; gap: 7px; height: 32px; padding-left: 12px; font-size: 12px; }
.add a { color: #1589bf; }
.ibody ul { padding-top: 3px; }
.ibody li { height: 21px; display: flex; align-items: center; gap: 9px; padding-left: 30px; }
.ibody li svg { margin-top: -2px; }
.more-events { display: block; width: 226px; height: 22px; margin: 16px 0 15px 10px; padding-left: 7px; text-align: left; border: 1px solid #b8b8b8; font-size: 12px; color: #000; }
.adapt { border-top: 1px solid #c8c8c8; padding: 9px 11px; }
.inspector .hbar .thumb { width: 39px; margin-left: 7px; }

.ime { position: absolute; right: 8px; bottom: 143px; height: 24px; width: 203px; display: flex; align-items: center; gap: 6px; background: #fff; border: 1px solid #ccc; }
.ime-logo { width: 23px; height: 24px; margin: -1px; background: #1577c9; display: grid; place-items: center; flex: none; }
.zh { font-size: 15px; line-height: 20px; color: #2a93dc; }

.taskbar { height: 40px; display: flex; align-items: center; border-top: 1px solid #22344c; font: 12px/16px "Noto Sans", "Noto Sans CJK SC", sans-serif; color: #fff; white-space: nowrap;
  background: linear-gradient(rgba(255, 255, 255, .25), transparent 12px), linear-gradient(90deg, #16375c 0, #1d5674 100px, #2a4f74 250px, #1c4160 365px, #50708c 390px, #587391 470px, #99adc5 485px, #93a8c0 600px, #7389a4 640px, #8fa5be 990px, #8298b2 1345px, #93a9c1 1450px, #9db2c8 1750px, #7388a2 1790px, #7d93ac 1820px, #173a62 1835px, #143860 100%); }
.taskbar > * { flex: none; }
.orb { width: 54px; padding-left: 8px; }
.ie { width: 64px; padding-left: 17px; }
.task { width: 116px; height: 38px; margin-right: 2px; padding-left: 7px; display: flex; align-items: center; gap: 5px; border: 1px solid #3b526d; border-radius: 3px; box-shadow: inset 0 0 0 1px rgba(255, 255, 255, .5); background: linear-gradient(160deg, rgba(255, 255, 255, .4), rgba(255, 255, 255, .12) 50%, rgba(255, 255, 255, .2) 51%); }
.task.dark { background: linear-gradient(165deg, rgba(255, 255, 255, .5), rgba(255, 255, 255, .2) 45%, rgba(255, 255, 255, .08) 46%, rgba(255, 255, 255, .15)); }
.task.active { background: linear-gradient(160deg, rgba(255, 255, 255, .6), rgba(255, 255, 255, .3) 50%, rgba(255, 255, 255, .5)); }
.rp { width: 32px; height: 32px; border-radius: 2px; background: linear-gradient(90deg, #9c10c8 0 6px, #e0b0ee 6px 8px, #a80cc8 8px); font: 13px/46px "Noto Sans", sans-serif; text-align: right; padding-right: 3px; overflow: hidden; }
.pins { display: flex; gap: 26px; padding: 0 16px 0 11px; }
.stack { display: flex; width: 348px; height: 38px; margin-right: 2px; border: 1px solid #3b526d; border-radius: 3px; box-shadow: inset 0 0 0 1px rgba(255, 255, 255, .5); background: linear-gradient(rgba(255, 255, 255, .3), rgba(255, 255, 255, .15)); }
.stack button { flex: 1; display: flex; align-items: center; gap: 6px; padding-left: 4px; }
.stack button + button { border-left: 1px solid #b5c4d4; }
.tray { flex: 1; display: flex; align-items: center; height: 39px; }
.tray > svg, .help, .lang { margin-bottom: 5px; }
.lang { width: 32px; padding-left: 10px; font: 11px/16px "Liberation Mono", monospace; }
.help { width: 16px; height: 16px; margin-left: 6px; border-radius: 8px; background: #0b2a9c; border: 1px solid #cdd8e8; text-align: center; font: bold 11px/14px "Liberation Sans", sans-serif; }
.tray .restore { margin: 0 0 8px 9px; }
.icons { display: flex; gap: 8px; padding: 3px 0 0 11px; }
.clock { flex: 1; display: flex; flex-direction: column; align-items: center; line-height: 18px; }
.peek { width: 14px; height: 38px; border: 1px solid #6f8cab; background: linear-gradient(135deg, #51749a, #1b426d); }
</style>
